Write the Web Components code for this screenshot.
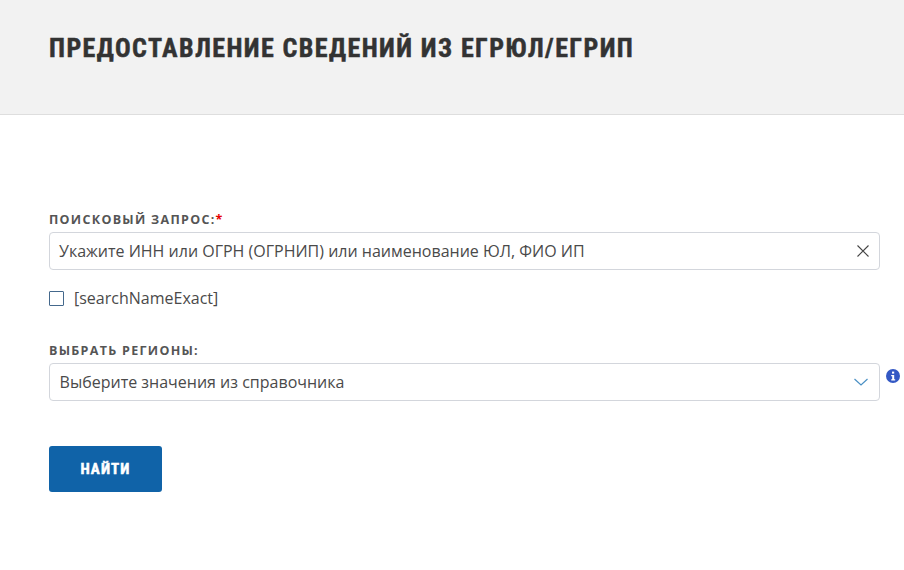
<!DOCTYPE html>
<html lang="ru"><head><meta charset="utf-8"><style>
html,body{margin:0;padding:0;background:#fff}
body{font-family:"Open Sans",sans-serif;color:#444}
</style></head><body>
<page-header>Предоставление сведений из ЕГРЮЛ/ЕГРИП</page-header>
<search-form>
  <form-field label="Поисковый запрос:" required>
    <text-box kind="clear">Укажите ИНН или ОГРН (ОГРНИП) или наименование ЮЛ, ФИО ИП</text-box>
  </form-field>
  <check-row>[searchNameExact]</check-row>
  <form-field label="Выбрать регионы:">
    <text-box kind="select" info>Выберите значения из справочника</text-box>
  </form-field>
  <action-button>Найти</action-button>
</search-form>
<script>
function def(name,html){customElements.define(name,class extends HTMLElement{
  constructor(){super();const t=document.createElement('template');t.innerHTML=typeof html==='function'?html(this):html;this.attachShadow({mode:'open'}).appendChild(t.content.cloneNode(true));}
});}
def('page-header',`<style>
:host{display:block;height:114px;background:#f2f2f2;border-bottom:1px solid #dedede;padding-left:49px}
h1{margin:0;padding-top:30px;font:700 26px/36px "Liberation Sans Narrow","Roboto Condensed",Roboto,sans-serif;letter-spacing:1.42px;-webkit-text-stroke:.5px #333;color:#333;text-transform:uppercase;white-space:nowrap}
</style><h1><slot></slot></h1>`);
def('search-form',`<style>
:host{display:block;padding:96px 0 0 49px}
</style><slot></slot>`);
def('form-field',el=>`<style>
:host{display:block;padding-top:1px}
label{display:block;font:700 12.5px/16px "Open Sans",sans-serif;letter-spacing:1.3px;text-transform:uppercase;color:#555;margin-bottom:4px}
i{font-style:normal;letter-spacing:0;color:#e60000}
</style><label>${el.getAttribute('label')}${el.hasAttribute('required')?'<i>*</i>':''}</label><slot></slot>`);
def('text-box',el=>{const k=el.getAttribute('kind');return `<style>
:host{display:flex;position:relative;width:831px}
.b{flex:1;box-sizing:border-box;height:38px;border:1px solid #d3d6dc;border-radius:4px;display:flex;align-items:center;justify-content:space-between;font:400 16px/22px "Open Sans",sans-serif;color:#4a4a4a;padding:0 10px 0 ${k==='select'?9.6:9}px;background:#fff}
svg{display:block;flex:none}
.info{position:absolute;left:837px;top:6px}
</style><div class="b"><span><slot></slot></span>${k==='clear'
?'<svg width="12" height="12" viewBox="0 0 12 12"><path d="M.5 .5 11.500 11.500M11.500 .5 .5 11.500" stroke="#444" stroke-width="1.1" fill="none"/></svg>'
:'<svg width="14" height="8" viewBox="0 0 14 8" style="margin-right:1px"><path d="M.5 1 7 7 13.500 1" stroke="#4a90c4" stroke-width="1.2" fill="none"/></svg>'}</div>${el.hasAttribute('info')?'<svg class="info" width="14" height="14" viewBox="0 0 14 14"><circle cx="7" cy="7" r="7" fill="#3358c4"/><rect x="6" y="2.600" width="2.200" height="2" fill="#fff"/><path d="M5.200 6h3v4.200h1v1.200H5.200v-1.200h1V7.200h-1z" fill="#fff"/></svg>':''}`});
def('check-row',`<style>
:host{display:flex;align-items:center;gap:10px;margin:17px 0 32px;font:400 16px/23px "Open Sans",sans-serif;color:#4a4a4a}
b{display:block;box-sizing:border-box;width:15px;height:15px;border:1px solid #44688c;border-radius:1px;background:#fff}
</style><b></b><span><slot></slot></span>`);
def('action-button',`<style>
:host{display:inline-flex;align-items:center;justify-content:center;width:113px;height:46px;margin-top:45px;background:#1063a8;border-radius:3px;color:#fff;font:700 15px/18px "Liberation Sans Narrow","Roboto Condensed",Roboto,sans-serif;letter-spacing:1.1px;-webkit-text-stroke:.5px #fff;text-transform:uppercase}
</style><slot></slot>`);
</script></body></html>
